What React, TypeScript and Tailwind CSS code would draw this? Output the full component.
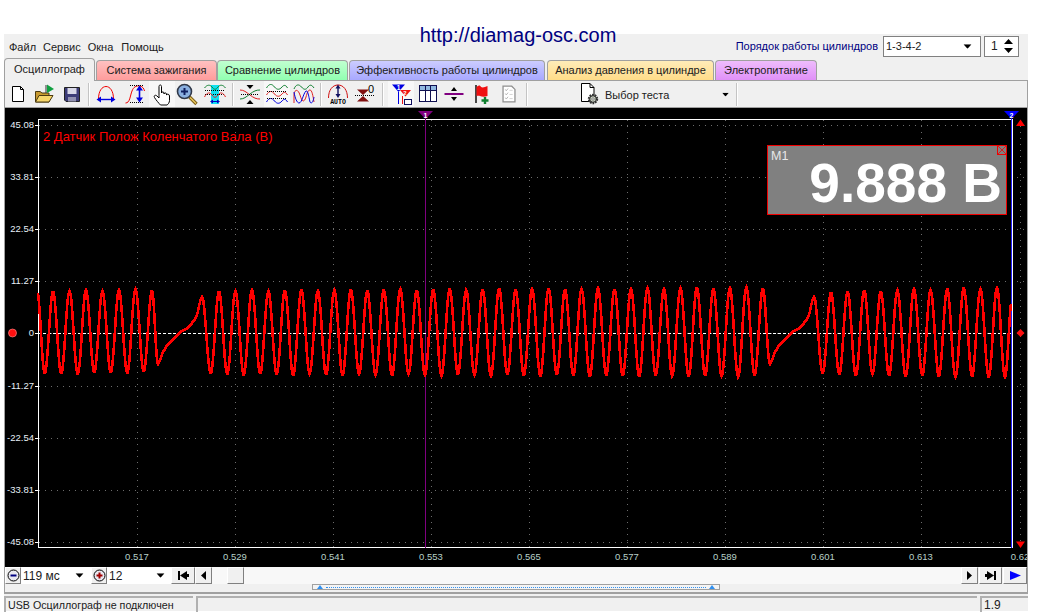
import React from "react";

const FONT = "font-['Liberation_Sans',Arial,sans-serif]";

function buildWave() {
  const k: [number, number][] = [];
  const regular = (start: number, n: number, period: number, top0: number, top1: number, bot0: number, bot1: number) => {
    for (let i = 0; i < n; i++) {
      const t = n > 1 ? i / (n - 1) : 0;
      const j = ((i * 7) % 3) - 1;
      k.push([start + i * period - period / 2, bot0 + (bot1 - bot0) * t + j * 0.7]);
      k.push([start + i * period, top0 + (top1 - top0) * t - j * 0.7]);
    }
  };
  const gap = (o: number) => {
    const g: [number, number][] = [[158, 364], [160, 360], [163, 352], [166, 347], [170, 342], [175, 337], [180, 332], [186, 329], [192, 323], [195, 319], [197, 315], [199, 306], [201, 298]];
    g.forEach(([x, y]) => k.push([x + o, y]));
  };
  k.push([37, 290]);
  regular(53, 7, 16.5, 291, 290, 374, 372);
  gap(0);
  k.push([202, 297]);
  regular(219, 34, 16.48, 291, 288, 374, 376);
  gap(612);
  k.push([814, 297]);
  regular(831, 11, 16.6, 292, 288, 374, 377);
  k.push([1005, 377]);
  k.push([1012, 300]);
  const pts: string[] = [];
  let idx = 0;
  for (let x = 38; x <= 1011; x += 0.5) {
    while (idx < k.length - 2 && k[idx + 1][0] < x) idx++;
    const [x0, y0] = k[idx];
    const [x1, y1] = k[idx + 1];
    const t = Math.min(1, Math.max(0, (x - x0) / (x1 - x0)));
    const smooth = (x0 >= 158 && x0 < 201) || (x0 >= 770 && x0 < 813);
    const s = smooth ? t : (1 - Math.cos(Math.PI * t)) / 2;
    pts.push(`${x},${Math.round(y0 + (y1 - y0) * s)}`);
  }
  return "M" + pts.join("L");
}

const yLabels = ["45.08", "33.81", "22.54", "11.27", "0", "-11.27", "-22.54", "-33.81", "-45.08"];
const xLabels = ["0.517", "0.529", "0.541", "0.553", "0.565", "0.577", "0.589", "0.601", "0.613", "0.62"];
const gx = [137, 235, 333, 431, 529, 627, 725, 823, 921, 1020];
const yAt = (i: number) => 125 + i * 52.1;

function Scope() {
  return (
    <svg width="1022" height="459" viewBox="5 108 1022 459" className="block bg-black shrink-0">
      {gx.map((x) => (
        <line key={x} x1={x + 0.5} x2={x + 0.5} y1={120} y2={552} stroke="#6c6c6c" strokeDasharray="1 5" />
      ))}
      {yLabels.map((l, i) => (
        <g key={l}>
          <line x1={39} x2={1027} y1={Math.round(yAt(i)) + 0.5} y2={Math.round(yAt(i)) + 0.5} stroke="#6c6c6c" strokeDasharray="1 5" />
          <line x1={35} x2={38} y1={Math.round(yAt(i)) + 0.5} y2={Math.round(yAt(i)) + 0.5} stroke="#fff" />
          <text x={34} y={yAt(i) + 3} textAnchor="end" fontSize="9.5" fill="#e8f0f8" fontFamily="Liberation Sans">{l}</text>
        </g>
      ))}
      {xLabels.map((l, i) => (
        <text key={l} x={gx[i]} y={560} textAnchor="middle" fontSize="9.5" fill="#b8d0c8" fontFamily="Liberation Sans">{l}</text>
      ))}
      <line x1={38.5} x2={38.5} y1={119} y2={548} stroke="#fff" />
      <line x1={38} x2={1013} y1={119.5} y2={119.5} stroke="#fff" />
      <line x1={38} x2={1013} y1={547.5} y2={547.5} stroke="#fff" />
      <line x1={1012.5} x2={1012.5} y1={119} y2={548} stroke="#fff" />
      <line x1={1011.5} x2={1011.5} y1={118} y2={548} stroke="#2020ff" />
      <line x1={425.5} x2={425.5} y1={118} y2={548} stroke="#800080" />
      <line x1={38} x2={1012} y1={333.5} y2={333.5} stroke="#fff" strokeDasharray="3 2" />
      <path d={buildWave()} fill="none" stroke="#ff0000" strokeWidth="2.6" shapeRendering="crispEdges" />
      <polygon points="418,111 433,111 425.5,119" fill="#800080" />
      <text x={425.5} y={118} textAnchor="middle" fontSize="7" fontWeight="bold" fill="#fff" fontFamily="Liberation Sans">1</text>
      <polygon points="1004,111 1019,111 1011.5,119" fill="#0000ff" />
      <text x={1011.5} y={118} textAnchor="middle" fontSize="7" fontWeight="bold" fill="#fff" fontFamily="Liberation Sans">2</text>
      <polygon points="1020.5,119.5 1016,126 1025,126" fill="#ff0000" />
      <polygon points="1016,541.5 1025,541.5 1020.5,548" fill="#ff0000" />
      <circle cx={12.5} cy={333} r={4} fill="#ff1010" stroke="#ff8080" strokeWidth="0.7" />
      <polygon points="1020.5,329 1024.5,333 1020.5,337 1016.5,333" fill="#ff1010" />
      <text x={43} y={141} fontSize="13" fill="#ff0000" fontFamily="Liberation Sans">2 Датчик Полож Коленчатого Вала (В)</text>
      <g>
        <rect x={767.5} y={145.5} width={239} height={69} fill="#808080" stroke="#f00000" />
        <rect x={997.5} y={145.5} width={9} height={9} fill="#808080" stroke="#f00000" />
        <path d="M998 146L1006 154M1006 146L998 154" stroke="#f00000" strokeWidth="0.8" />
        <text x={771} y={160} fontSize="12.5" fill="#e8e8e8" fontFamily="Liberation Sans">M1</text>
        <text x={1002} y={202} textAnchor="end" fontSize="55" fontWeight="bold" fill="#fff" fontFamily="Liberation Sans">9.888 В</text>
      </g>
    </svg>
  );
}

const Down = ({ className = "" }: { className?: string }) => (
  <svg width="9" height="5" viewBox="0 0 9 5" className={className}><polygon points="0,0 9,0 4.5,5" fill="#000" /></svg>
);

const Ico = ({ children }: { children: React.ReactNode }) => (
  <svg width="24" height="24" viewBox="0 0 24 24" fill="none">{children}</svg>
);

const IconNew = () => (
  <Ico><path d="M6.5 4.5H14.5L17.5 7.5V19.5H6.5Z" fill="#fff" stroke="#000" /><path d="M14.5 4.5V7.5H17.5" stroke="#000" /></Ico>
);
const IconOpen = () => (
  <Ico>
    <path d="M2.5 9.5H7L9 11H16V20H2.5Z" fill="#c89a30" stroke="#4a3a10" />
    <path d="M2.5 20L6 13.5H20L16 20Z" fill="#f6d66a" stroke="#4a3a10" />
    <path d="M13 3V11" stroke="#333" /><path d="M14 2.5L21 7L14 11Z" fill="#10a040" />
  </Ico>
);
const IconSave = () => (
  <Ico>
    <path d="M4.5 5.5H19.5V19.5H6L4.5 18Z" fill="#3c3c78" stroke="#222" />
    <rect x="7.5" y="6" width="9" height="6" fill="#d8d8e8" />
    <rect x="8" y="15" width="8" height="4.5" fill="#9090b0" />
  </Ico>
);
const IconArcH = () => (
  <Ico>
    <path d="M4.5 17C4.5 9 8 4.5 12 4.5C16 4.5 19.5 9 19.5 17" stroke="#f00000" />
    <path d="M5 17.5H19" stroke="#0000e0" strokeWidth="1.4" />
    <path d="M2.5 17.5L7 14.5V20.5Z M21.5 17.5L17 14.5V20.5Z" fill="#0000e0" />
  </Ico>
);
const IconArcV = () => (
  <Ico>
    <path d="M2.5 21C7 21 7 14 9 9C10.5 5 13 3.5 17 4C20 4.5 21 7 21.5 9" stroke="#f00000" />
    <path d="M7 3.5H20M7 20.5H20" stroke="#000" strokeDasharray="1 1" />
    <path d="M16.5 7V17" stroke="#0000e0" strokeWidth="1.6" />
    <path d="M16.5 3.5L13 8.5H20Z M16.5 20.5L13 15.5H20Z" fill="#0000e0" />
  </Ico>
);
const IconHand = () => (
  <Ico>
    <path d="M9 13.5V4.5C9 2.5 11.5 2.5 11.5 4.5V11C11.5 9.6 14 9.6 14 11V12C14 10.6 16.5 10.6 16.5 12V13C16.5 11.8 19.5 11.8 19.5 14V18.5C19.5 20.5 18 22.5 17 23H10.5C9 21.5 6 18 4.5 15.5C3.5 13.5 5.5 12.5 7 14L9 16Z" fill="#fff" stroke="#000" />
  </Ico>
);
const IconZoom = () => (
  <Ico>
    <path d="M14.5 15L21.5 22" stroke="#7a5a10" strokeWidth="3.4" />
    <path d="M15 15.5L21 21.5" stroke="#e8c860" strokeWidth="1.4" />
    <circle cx="9.5" cy="9.5" r="7" fill="#8ab0e0" stroke="#303848" strokeWidth="1.6" />
    <path d="M6 9.5H13M9.5 6V13" stroke="#102060" strokeWidth="2" />
  </Ico>
);
const IconCyan = () => (
  <Ico>
    <rect x="8" y="3" width="8" height="19" fill="#10e0f0" />
    <path d="M1.5 6C4 2.5 7 2.5 9 5C11 8 13 8 15 5C17 2.5 20 2.5 22.5 6" stroke="#108030" />
    <path d="M2 12.5H22M2 8.5H22" stroke="#000" strokeDasharray="1 1" />
    <path d="M1.5 15C4 10 7 10 9 13C11 16 13 16 15 13C17 10 20 10 22.5 15" stroke="#e02020" />
    <path d="M8 19.5H16" stroke="#0000c0" /><path d="M7 19.5L10 17.5V21.5Z M17 19.5L14 17.5V21.5Z" fill="#0000c0" />
  </Ico>
);
const IconCross = () => (
  <Ico>
    <path d="M2 8C6 8 8 10 12 13C16 16 18 17 22 17" stroke="#e02020" />
    <path d="M2 17C6 17 8 15 12 12C16 9 18 8 22 8" stroke="#108030" />
    <path d="M3 12.5H21" stroke="#000" strokeDasharray="1 1" />
    <path d="M8.5 3H15.5L12 7Z M8.5 22H15.5L12 18Z" fill="#000" />
  </Ico>
);
const IconRows = () => (
  <Ico>
    <path d="M1.5 6C4 1.5 7 1.5 9.5 5C12 8 14.5 8 17 5C19 2.5 21 3 22.5 6" stroke="#108030" />
    <path d="M1.5 13C4 8.5 7 8.5 9.5 12C12 15 14.5 15 17 12C19 9.5 21 10 22.5 13" stroke="#e02020" />
    <path d="M1.5 20C4 15.5 7 15.5 9.5 19C12 22 14.5 22 17 19C19 16.5 21 17 22.5 20" stroke="#0000e0" />
    <path d="M2 9.5H22M2 16.5H22" stroke="#000" strokeDasharray="1 1" />
  </Ico>
);
const IconOverlay = () => (
  <Ico>
    <path d="M2 7C4 2 7 2 9.5 5C12 8 14 8 16 5C18 2 20 3 22 6" stroke="#108030" />
    <path d="M2 21V12C3 7 6 7 8 13C10 20 12 21 14 15C15 11 16 8 18 8C20 8 21 14 22 20" stroke="#e02020" />
    <path d="M2 10C3 16 5 21 7 21C10 21 11 12 14 9C16 8 17 16 18 20C19 22 21 21 22 15" stroke="#0000e0" />
  </Ico>
);
const IconAuto = () => (
  <Ico>
    <path d="M2.5 16C2.5 8 6.5 3 12 3C17.5 3 21.5 8 21.5 16" stroke="#d01010" />
    <path d="M12 5V14" stroke="#101060" strokeWidth="1.4" />
    <path d="M12 2.5L9.5 6.5H14.5Z M12 16L9.5 12H14.5Z" fill="#101060" />
    <text x="12" y="22" textAnchor="middle" fontSize="6.5" fontWeight="bold" fill="#000" fontFamily="Liberation Mono">AUTO</text>
  </Ico>
);
const IconZero = () => (
  <Ico>
    <path d="M3 7.5H15L9 13Z M3 19.5H15L9 14Z" fill="#801010" />
    <path d="M1 13.5H20" stroke="#000" strokeDasharray="1 1" />
    <text x="17" y="11" textAnchor="middle" fontSize="11" fill="#000" fontFamily="Liberation Sans">0</text>
  </Ico>
);
const IconFilter = () => (
  <Ico>
    <path d="M3 2.5H16L9.5 10Z" fill="#0000e0" />
    <text x="9.5" y="8" textAnchor="middle" fontSize="6.5" fontWeight="bold" fill="#fff" fontFamily="Liberation Sans">1</text>
    <path d="M9.5 10V22" stroke="#0000e0" />
    <path d="M11 8H22L16.5 14.5Z" fill="#f01010" />
    <text x="16" y="13" textAnchor="middle" fontSize="6" fontWeight="bold" fill="#fff" fontFamily="Liberation Sans">2</text>
    <path d="M13.5 14V22" stroke="#f01010" />
    <rect x="15.5" y="17.5" width="7" height="5" fill="#fff" stroke="#101060" />
  </Ico>
);
const IconTable = () => (
  <Ico>
    <rect x="3.5" y="3.5" width="17" height="16" fill="#fff" stroke="#101050" />
    <rect x="4" y="4" width="16" height="4" fill="#90b8e0" />
    <path d="M3.5 8.5H20.5M9.5 4V19M14.5 4V19" stroke="#101050" />
  </Ico>
);
const IconLine = () => (
  <Ico>
    <path d="M2.5 12H21.5" stroke="#800080" strokeWidth="2" />
    <path d="M12 5L9 9H15Z M12 19L9 15H15Z" fill="#000" />
  </Ico>
);
const IconFlag = () => (
  <Ico>
    <path d="M6 3V21" stroke="#000" strokeWidth="1.4" />
    <path d="M6.5 5C9 3 10 3 11 5C13 6 15 5 17.5 4V14C15 15 12 15 10 14C8.5 13.5 7.5 14 6.5 14Z" fill="#f01010" />
    <path d="M15 15V22M11.5 18.5H18.5" stroke="#108030" strokeWidth="2.4" />
  </Ico>
);
const IconPage = () => (
  <Ico>
    <path d="M5.5 3.5H15L18.5 7V20.5H5.5Z" fill="#fff" stroke="#909090" strokeWidth="1.4" />
    <path d="M8 7L9 8.5L11 6M8 11.5L9 13L11 10.5M8 16L9 17.5L11 15" stroke="#b0b0b0" />
    <path d="M12.5 8H16M12.5 12.5H16M12.5 17H16" stroke="#d0d0d0" />
  </Ico>
);
const IconGearPage = () => (
  <Ico>
    <path d="M3.5 1.5H12L16 5.5V19.5H3.5Z" fill="#fff" stroke="#000" />
    <path d="M12 1.5V5.5H16" stroke="#000" />
    <circle cx="15" cy="17" r="4" fill="#c8d0c0" stroke="#303030" strokeWidth="2.4" strokeDasharray="1.6 0.9" />
    <circle cx="15" cy="17" r="3.4" stroke="#303030" />
    <circle cx="15" cy="17" r="1.2" fill="#fff" stroke="#404040" strokeWidth="0.6" />
  </Ico>
);

const Sep = () => (
  <div className="w-[6px] h-full flex items-center justify-center shrink-0">
    <div className="w-[2px] h-[23px] bg-[#c4c4c4] border-r border-white" />
  </div>
);

const Btn = ({ w, on, children }: { w: string; on?: boolean; children: React.ReactNode }) => (
  <div className={`${w} h-[26px] flex items-center justify-center shrink-0 ${on ? "bg-[#f8f8f8]" : ""}`}>{children}</div>
);

function Toolbar() {
  return (
    <div className="h-[28px] flex items-center border-y border-[#a0a0a0] bg-[#f0f0f0] shrink-0">
      <Btn w="w-[26px]"><IconNew /></Btn>
      <Btn w="w-[27px]"><IconOpen /></Btn>
      <Btn w="w-[28px]"><IconSave /></Btn>
      <Sep />
      <Btn w="w-[28px]"><IconArcH /></Btn>
      <Btn w="w-[29px]"><IconArcV /></Btn>
      <Btn w="w-[26px]" on><IconHand /></Btn>
      <Btn w="w-[24px]"><IconZoom /></Btn>
      <Btn w="w-[31px]"><IconCyan /></Btn>
      <Sep />
      <Btn w="w-[28px]"><IconCross /></Btn>
      <Btn w="w-[26px]" on><IconRows /></Btn>
      <Btn w="w-[28px]"><IconOverlay /></Btn>
      <Sep />
      <Btn w="w-[28px]"><IconAuto /></Btn>
      <Btn w="w-[28px]"><IconZero /></Btn>
      <Sep />
      <div className="w-[2px] shrink-0" />
      <Btn w="w-[26px]" on><IconFilter /></Btn>
      <Btn w="w-[28px]"><IconTable /></Btn>
      <Btn w="w-[24px]"><IconLine /></Btn>
      <Btn w="w-[32px]"><IconFlag /></Btn>
      <Btn w="w-[22px]"><IconPage /></Btn>
      <div className="w-[4px] shrink-0" />
      <Sep />
      <div className="w-[204px] h-full flex items-center shrink-0">
        <div className="ml-[48px]"><IconGearPage /></div>
        <span className="ml-[3px] mt-[2px] text-[11px] leading-none text-[#202020]">Выбор теста</span>
        <Down className="ml-[52px] scale-75" />
      </div>
      <Sep />
    </div>
  );
}

const tabBase = "h-[20px] flex items-center justify-center rounded-t-[4px] border border-b-0 border-[#a0a0a0] text-[11px] leading-none text-[#202020] bg-linear-to-b shrink-0";

function Tabs() {
  return (
    <div className="h-[22px] flex items-end shrink-0 relative">
      <div className="w-[91px] h-[23px] -mb-px z-10 flex items-center justify-center rounded-t-[4px] border border-b-0 border-[#a0a0a0] bg-[#f0f0f0] text-[11px] leading-none text-[#202020] shrink-0 pb-[2px]">Осциллограф</div>
      <div className="w-px shrink-0" />
      <div className={`${tabBase} w-[121px] from-[#ffc0c0] to-[#ff9c9c]`}>Система зажигания</div>
      <div className={`${tabBase} w-[131px] from-[#c0ffd0] to-[#90ffb0]`}>Сравнение цилиндров</div>
      <div className={`${tabBase} w-[196px] from-[#ccccff] to-[#a8a8ff] ml-px`}>Эффективность работы цилиндров</div>
      <div className={`${tabBase} w-[167px] from-[#ffecb8] to-[#ffdc88] ml-[2px]`}>Анализ давления в цилиндре</div>
      <div className={`${tabBase} w-[102px] from-[#eebcfc] to-[#e090f8] ml-px`}>Электропитание</div>
    </div>
  );
}

const RaisedBtn = ({ w, children }: { w: string; children: React.ReactNode }) => (
  <div className={`${w} h-[17px] bg-[#f0f0f0] border border-white border-r-[#808080] border-b-[#808080] flex items-center justify-center shrink-0`}>{children}</div>
);
const CircleBtn = ({ color, plus }: { color: string; plus?: boolean }) => (
  <svg width="13" height="13" viewBox="0 0 13 13" fill="none">
    <circle cx="6.5" cy="6.5" r="5.5" fill="#e8e8f0" stroke="#000" />
    <path d={plus ? "M3.5 6.5H9.5M6.5 3.5V9.5" : "M3.5 6.5H9.5"} stroke={color} strokeWidth="2" />
  </svg>
);

function Transport() {
  return (
    <div className="h-[17px] flex items-center shrink-0 text-[#202020]">
      <RaisedBtn w="w-[16px]"><CircleBtn color="#000080" /></RaisedBtn>
      <div className="w-[70px] h-full bg-white flex items-center pl-[2px] text-[12px] leading-none shrink-0">119 мс<Down className="ml-auto mr-[7px] scale-90" /></div>
      <RaisedBtn w="w-[16px]"><CircleBtn color="#a00000" plus /></RaisedBtn>
      <div className="w-[64px] h-full bg-white flex items-center pl-[2px] text-[12px] leading-none shrink-0">12<Down className="ml-auto mr-[6px] scale-90" /></div>
      <RaisedBtn w="w-[24px]">
        <svg width="11" height="9" viewBox="0 0 11 9"><path d="M0 0H2V9H0Z M2 4.5L9 0V9Z" fill="#000" /><path d="M9 3H11V6H9Z" fill="#000" /></svg>
      </RaisedBtn>
      <RaisedBtn w="w-[17px]">
        <svg width="5" height="9" viewBox="0 0 5 9"><path d="M5 0V9L0 4.5Z" fill="#000" /></svg>
      </RaisedBtn>
      <div className="flex-1 h-full bg-[#f8f8f8] flex items-center pl-[15px]">
        <div className="w-[17px] h-[17px] bg-[#f0f0f0] border border-white border-r-[#808080] border-b-[#808080]" />
      </div>
      <RaisedBtn w="w-[17px]">
        <svg width="5" height="9" viewBox="0 0 5 9"><path d="M0 0V9L5 4.5Z" fill="#000" /></svg>
      </RaisedBtn>
      <div className="w-px shrink-0" />
      <RaisedBtn w="w-[23px]">
        <svg width="11" height="9" viewBox="0 0 11 9"><path d="M9 0H11V9H9Z M9 4.5L2 0V9Z" fill="#000" /><path d="M0 3H2V6H0Z" fill="#000" /></svg>
      </RaisedBtn>
      <div className="w-px shrink-0" />
      <RaisedBtn w="w-[24px]">
        <svg width="11" height="9" viewBox="0 0 11 9"><path d="M0 0V9L11 4.5Z" fill="#0000ff" /></svg>
      </RaisedBtn>
    </div>
  );
}

function Splitter() {
  return (
    <div className="h-[8px] flex items-start shrink-0 pl-[307px]">
      <div className="w-[408px] h-[6px] border border-[#a0a0a0] bg-[#f4f4f4] flex items-center justify-between px-[4px]">
        <svg width="6" height="4" viewBox="0 0 6 4"><path d="M3 0L6 4H0Z" fill="#3090f0" /></svg>
        <div className="flex-1 mx-[3px] border-t border-dotted border-[#3090f0]" />
        <svg width="6" height="4" viewBox="0 0 6 4"><path d="M3 0L6 4H0Z" fill="#3090f0" /></svg>
      </div>
    </div>
  );
}

export default function App() {
  return (
    <div className={`w-[1040px] h-[616px] bg-white overflow-hidden ${FONT}`}>
      <div className="h-[34px] flex justify-center pr-[4px] relative z-20">
        <span className="text-[20px] leading-[23px] mt-[24px] h-[23px] text-[#000080] whitespace-nowrap">http://diamag-osc.com</span>
      </div>
      <div className="ml-[4px] w-[1024px] h-[577px] bg-[#f0f0f0] flex flex-col">
        <div className="h-[24px] flex items-center text-[11px] leading-none text-[#202020] pl-[5px] shrink-0">
          <span className="mt-[3px]">Файл</span>
          <span className="ml-[7px] mt-[3px]">Сервис</span>
          <span className="ml-[7px] mt-[3px]">Окна</span>
          <span className="ml-[8px] mt-[3px]">Помощь</span>
          <span className="ml-auto text-[11px] text-[#000080] mt-[1px]">Порядок работы цилиндров</span>
          <div className="ml-[5px] w-[98px] h-[21px] bg-white border border-[#808080] flex items-center pl-[2px] text-[#202020]">
            1-3-4-2<Down className="ml-auto mr-[8px] scale-90" />
          </div>
          <div className="ml-[3px] mr-[9px] w-[35px] h-[21px] bg-white border border-[#808080] flex items-center pl-[6px] text-[12px] text-[#202020]">
            1
            <svg width="9" height="16" viewBox="0 0 9 16" className="ml-auto mr-[5px]"><path d="M4.5 1L9 6H0Z M4.5 15L9 10H0Z" fill="#000" /></svg>
          </div>
        </div>
        <Tabs />
        <div className="border-x border-[#a0a0a0] flex flex-col shrink-0">
          <Toolbar />
          <Scope />
          <Transport />
          <Splitter />
        </div>
        <div className="h-[2px] bg-[#a0a0a0] shrink-0" />
        <div className="h-[2px] shrink-0" />
        <div className="h-[16px] flex text-[10.7px] leading-none text-[#202020] shrink-0">
          <div className="w-[189px] border-t-2 border-l-2 border-[#b0b0b0] flex items-center pl-[2px] shrink-0">USB Осциллограф не подключен</div>
          <div className="w-[3px] shrink-0" />
          <div className="w-[781px] border-t-2 border-l-2 border-[#b0b0b0] shrink-0" />
          <div className="w-[3px] shrink-0" />
          <div className="w-[48px] border-t-2 border-l-2 border-[#b0b0b0] flex items-center pl-[2px] text-[12px] shrink-0">1.9</div>
        </div>
      </div>
    </div>
  );
}
